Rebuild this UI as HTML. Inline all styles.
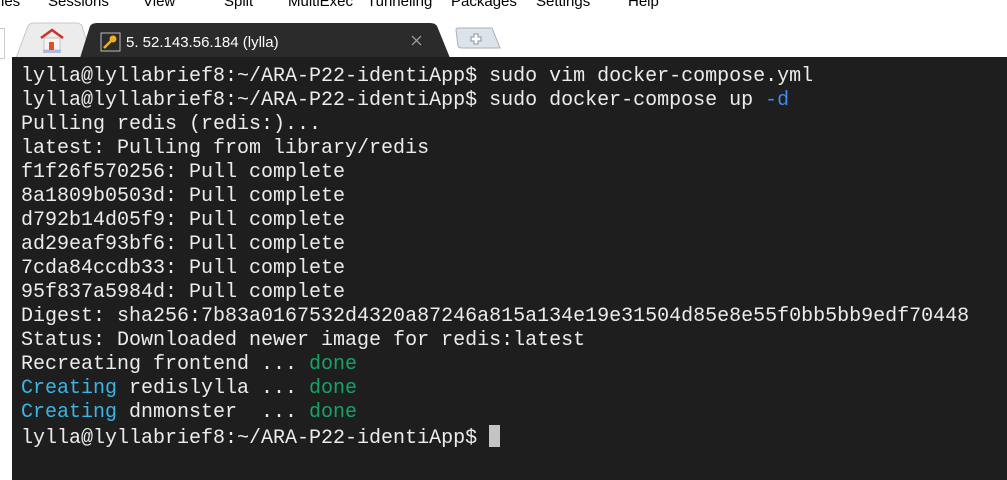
<!DOCTYPE html>
<html><head><meta charset="utf-8"><style>
body{margin:0;width:1007px;height:480px;overflow:hidden;background:#fff;position:relative;font-family:"Liberation Sans",sans-serif}
.menu{position:absolute;top:-7px;left:0;font-size:15px;color:#000;white-space:nowrap}
.menu span{position:absolute;top:0}
.term{position:absolute;left:12px;top:57px;width:995px;height:423px;background:#1e1e1e}
pre{margin:0;position:absolute;left:9px;top:8px;font-family:"Liberation Mono","DejaVu Sans Mono",monospace;font-size:20px;line-height:24px;color:#ececec}
.g{color:#16a36a}.c{color:#3bb5e8}.b{color:#3b8eea}
.cur{display:inline-block;width:11px;height:22px;background:#c4c4c4;vertical-align:-4px}
</style></head><body>
<div class="menu"><span style="left:-4px">nes</span><span style="left:48px">Sessions</span><span style="left:143px">View</span><span style="left:224px">Split</span><span style="left:288px">MultiExec</span><span style="left:367px">Tunneling</span><span style="left:451px">Packages</span><span style="left:536px">Settings</span><span style="left:628px">Help</span></div>
<div style="position:absolute;left:0;top:28px;width:4px;height:29px;border:1px solid #ccc;border-left:none"></div>
<svg style="position:absolute;left:0;top:22px" width="520" height="36">
<path d="M16 36 L28 4 Q30 1 34 1 L76 1 Q80 1 82 4 L92 36Z" fill="#ececec" stroke="#c8c8c8"/>
<path d="M80 36 L90 4 Q92 1 97 1 L430 1 Q435 1 437 4 L450 36Z" fill="#2b2b2b"/>
<path d="M456 8 Q456 6 459 6 L492 6 L500 26 L462 26 Q459 26 458 24Z" fill="#dde3ea" stroke="#a8b0ba"/>
<path d="M474 12 h4 v3 h3 v4 h-3 v3 h-4 v-3 h-3 v-4 h3z" fill="#fff" stroke="#8a929c"/>
<path d="M41 16 L52 8 L63 16" fill="none" stroke="#d0302a" stroke-width="2.5"/>
<rect x="44" y="16" width="16" height="12" fill="#f4f4f4" stroke="#999" stroke-width=".5"/>
<rect x="49" y="20" width="5" height="8" fill="#e05020"/>
<rect x="43" y="28" width="18" height="3" fill="#b0b8e0"/>
<rect x="101" y="11" width="19" height="18" fill="none" stroke="#bbb"/>
<path d="M104 26 L111 19" stroke="#f0b020" stroke-width="2.5"/><circle cx="113" cy="17" r="3.5" fill="#f0b020"/>
<text x="126" y="25" font-family="Liberation Sans" font-size="15" fill="#fff">5. 52.143.56.184 (lylla)</text>
<path d="M412 14 l9 9 M421 14 l-9 9" stroke="#aaa" stroke-width="1.2"/>
</svg>
<div class="term"><pre>lylla@lyllabrief8:~/ARA-P22-identiApp$ sudo vim docker-compose.yml
lylla@lyllabrief8:~/ARA-P22-identiApp$ sudo docker-compose up <span class="b">-d</span>
Pulling redis (redis:)...
latest: Pulling from library/redis
f1f26f570256: Pull complete
8a1809b0503d: Pull complete
d792b14d05f9: Pull complete
ad29eaf93bf6: Pull complete
7cda84ccdb33: Pull complete
95f837a5984d: Pull complete
Digest: sha256:7b83a0167532d4320a87246a815a134e19e31504d85e8e55f0bb5bb9edf70448
Status: Downloaded newer image for redis:latest
Recreating frontend ... <span class="g">done</span>
<span class="c">Creating</span> redislylla ... <span class="g">done</span>
<span class="c">Creating</span> dnmonster  ... <span class="g">done</span>
lylla@lyllabrief8:~/ARA-P22-identiApp$ <span class="cur"></span></pre></div>
</body></html>
